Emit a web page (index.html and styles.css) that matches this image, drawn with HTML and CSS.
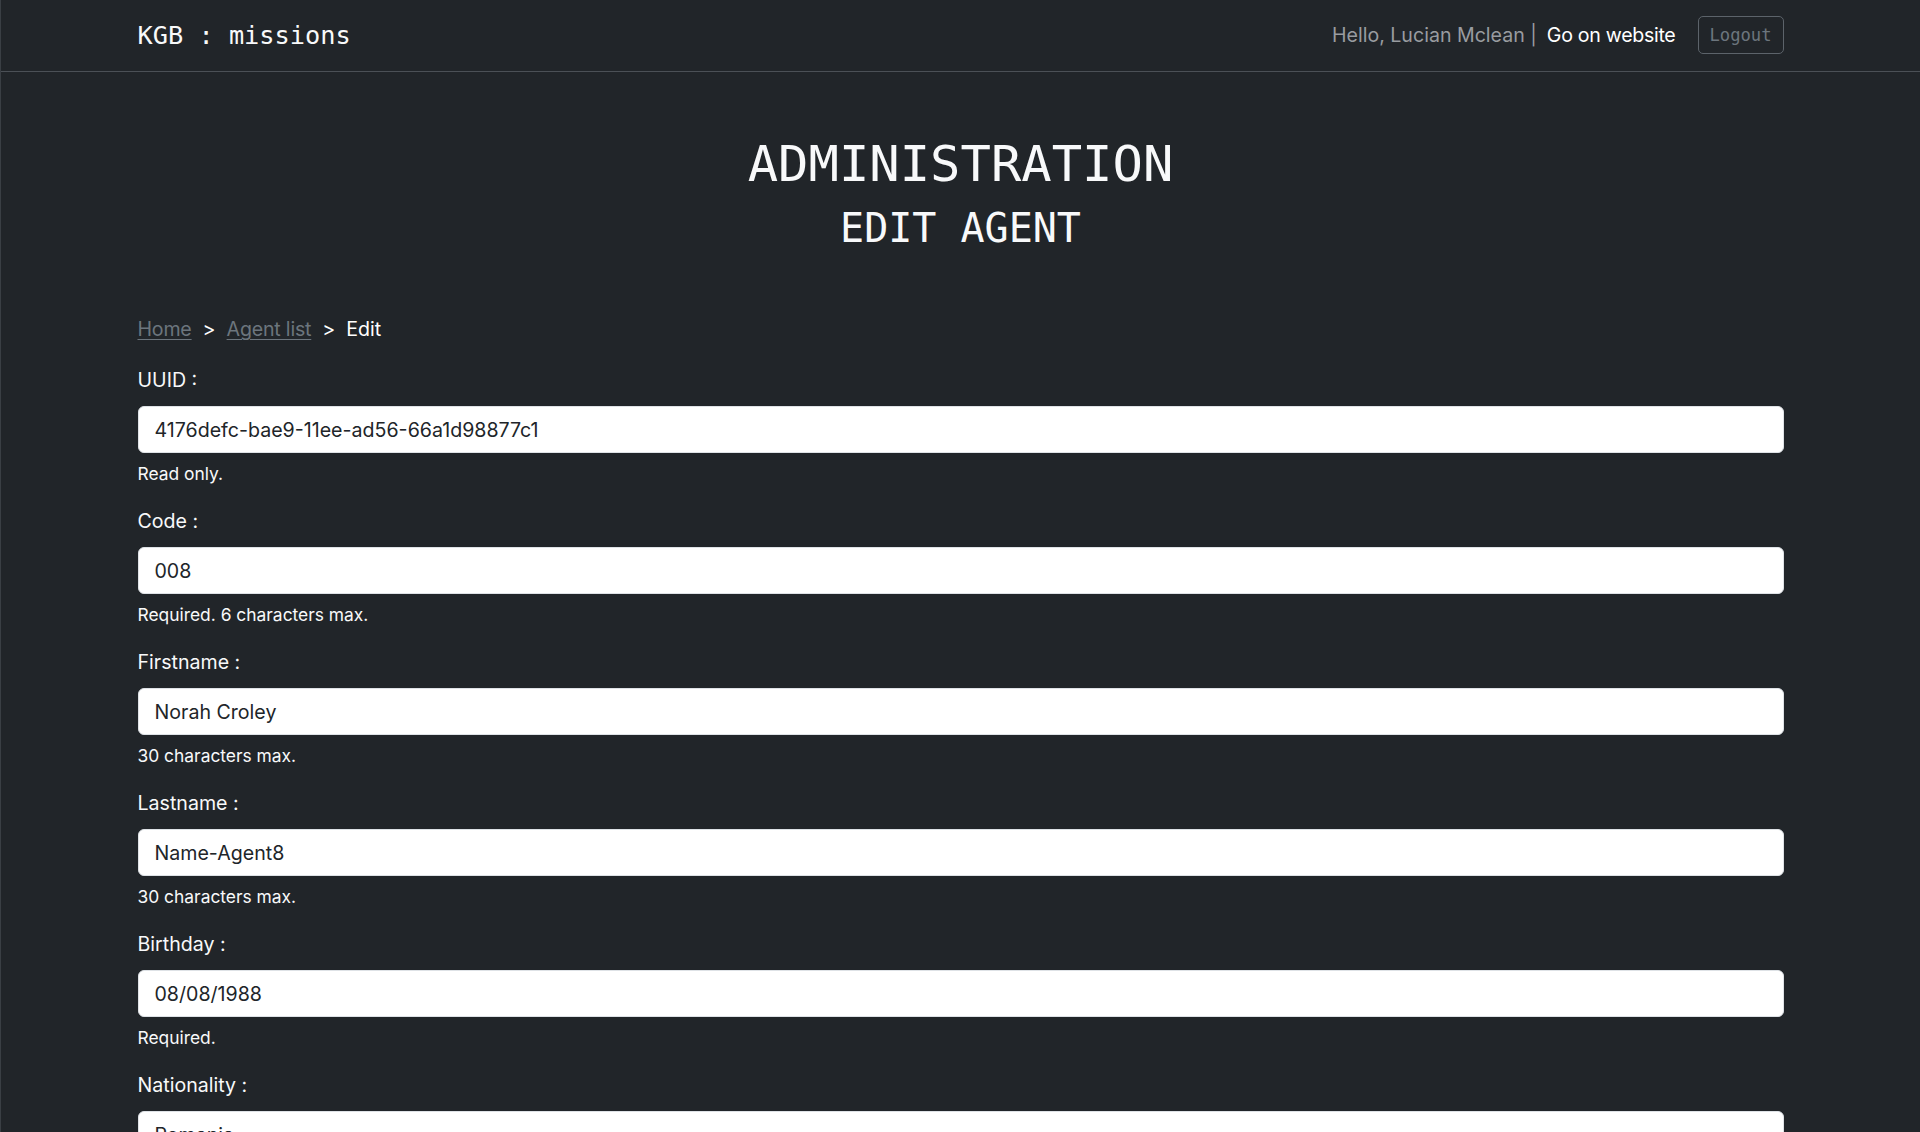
FILE: index.html
```html
<!DOCTYPE html>
<html lang="en">
<head>
<meta charset="utf-8">
<title>KGB : missions - Edit agent</title>
<link rel="stylesheet" href="styles.css">
</head>
<body>
<nav class="navbar">
  <div class="container nav-inner">
    <a class="brand" href="#">KGB : missions</a>
    <div class="nav-right">
      <span class="hello">Hello, Lucian Mclean |</span>
      <a class="site-link" href="#">Go on website</a>
      <button class="logout" type="button">Logout</button>
    </div>
  </div>
</nav>

<main class="container">
  <header class="titles">
    <h1 class="title">ADMINISTRATION</h1>
    <h2 class="subtitle">EDIT AGENT</h2>
  </header>

  <div class="breadcrumb">
    <a href="#" class="crumb-link">Home</a>
    <span class="sep">&gt;</span>
    <a href="#" class="crumb-link">Agent list</a>
    <span class="sep">&gt;</span>
    <span class="crumb-current">Edit</span>
  </div>

  <form class="form">
    <div class="field">
      <label class="label" for="uuid">UUID :</label>
      <input class="input" id="uuid" type="text" value="4176defc-bae9-11ee-ad56-66a1d98877c1" readonly>
      <div class="help">Read only.</div>
    </div>
    <div class="field">
      <label class="label" for="code">Code :</label>
      <input class="input" id="code" type="text" value="008">
      <div class="help">Required. 6 characters max.</div>
    </div>
    <div class="field">
      <label class="label" for="firstname">Firstname :</label>
      <input class="input" id="firstname" type="text" value="Norah Croley">
      <div class="help">30 characters max.</div>
    </div>
    <div class="field">
      <label class="label" for="lastname">Lastname :</label>
      <input class="input" id="lastname" type="text" value="Name-Agent8">
      <div class="help">30 characters max.</div>
    </div>
    <div class="field">
      <label class="label" for="birthday">Birthday :</label>
      <input class="input" id="birthday" type="text" value="08/08/1988">
      <div class="help">Required.</div>
    </div>
    <div class="field">
      <label class="label" for="nationality">Nationality :</label>
      <input class="input" id="nationality" type="text" value="Romania">
      <div class="help">Required.</div>
    </div>
  </form>
</main>
</body>
</html>
```

FILE: styles.css
```css
* {
  box-sizing: border-box;
}

html {
  overflow: hidden;
}

body {
  margin: 0;
  background: #212529;
  color: #f8f9fa;
  font-family: Inter, "Noto Sans", "Liberation Sans", sans-serif;
  font-size: 19.6px;
  line-height: 29px;
  border-left: 1px solid #3a3f44;
}

.container {
  width: 1646px;
  margin: 0 auto;
}

.navbar {
  height: 72px;
  border-bottom: 1px solid #4b5056;
}

.nav-inner {
  height: 71px;
  display: flex;
  align-items: center;
  justify-content: space-between;
}

.brand {
  font-family: "DejaVu Sans Mono", "Liberation Mono", monospace;
  font-size: 25.3px;
  color: #f8f9fa;
  text-decoration: none;
  padding-bottom: 1px;
}

.nav-right {
  display: flex;
  align-items: center;
}

.hello {
  color: #999ca0;
}

.site-link {
  color: #ffffff;
  text-decoration: none;
  margin-left: 10px;
  letter-spacing: -0.3px;
}

.logout {
  margin-left: 22px;
  width: 86px;
  height: 38px;
  background: transparent;
  border: 1px solid #5c636a;
  border-radius: 5px;
  color: #6c757d;
  font-family: "DejaVu Sans Mono", "Liberation Mono", monospace;
  font-size: 17.2px;
  padding: 0;
  margin-top: -1px;
}

.titles {
  padding-top: 62px;
  text-align: center;
  font-family: "DejaVu Sans Mono", "Liberation Mono", monospace;
  font-weight: normal;
}

.title {
  margin: 0;
  font-size: 50.5px;
  line-height: 60px;
  font-weight: normal;
  color: #f8f9fa;
}

.subtitle {
  margin: 10px 0 0;
  font-size: 40px;
  line-height: 48px;
  font-weight: normal;
  color: #f8f9fa;
}

.breadcrumb {
  margin-top: 63px;
  display: flex;
  align-items: center;
  height: 29px;
}

.crumb-link {
  color: #6c757d;
  text-decoration: underline;
  text-underline-offset: 3px;
  text-decoration-thickness: 1px;
  letter-spacing: -0.2px;
}

.sep {
  margin: 0 11px;
  color: #ffffff;
}

.crumb-current {
  color: #ffffff;
}

.form {
  margin-top: 22px;
}

.field {
  margin-bottom: 21px;
}

.label {
  display: block;
  line-height: 29px;
  margin-bottom: 11px;
  color: #f8f9fa;
}

.input {
  display: block;
  width: 100%;
  height: 47px;
  padding: 0 16px;
  border: 1px solid #dee2e6;
  border-radius: 6px;
  background: #ffffff;
  color: #212529;
  font-family: Inter, "Noto Sans", "Liberation Sans", sans-serif;
  font-size: 19.6px;
  outline: none;
}

.help {
  margin-top: 7.5px;
  font-size: 17.4px;
  line-height: 25.5px;
  color: #f8f9fa;
}
```
